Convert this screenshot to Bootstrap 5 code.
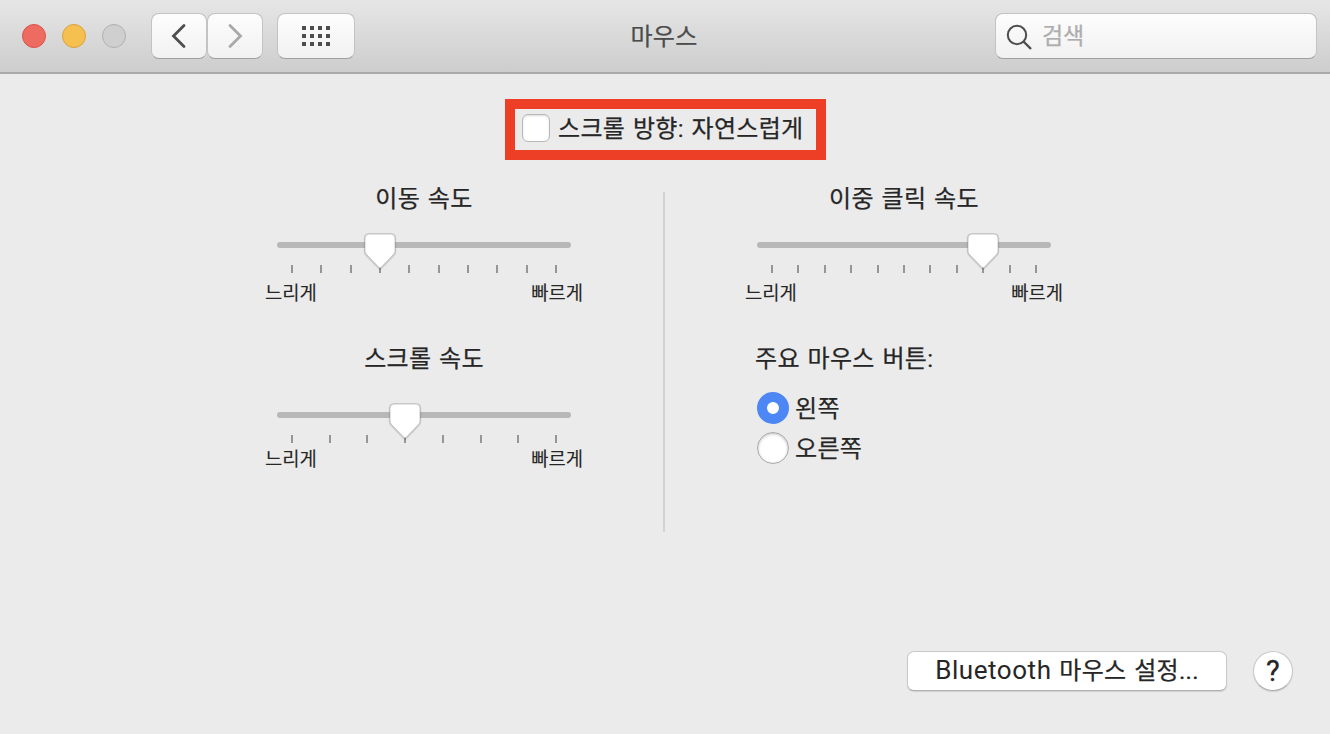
<!DOCTYPE html>
<html lang="ko">
<head>
    <title>마우스</title>
    <meta charset="UTF-8">
    <meta name="viewport" content="width=device-width, initial-scale=1.0">
    <link href="https://cdn.jsdelivr.net/npm/bootstrap@5.3.0/dist/css/bootstrap.min.css" rel="stylesheet">
    <style>
        body {
            font-family: Roboto, "Noto Sans CJK KR", sans-serif;
            font-size: 24px;
            line-height: 32px;
            letter-spacing: .3px;
            color: #262626;
            -webkit-text-stroke: .25px;
            background: #ebebeb;
            overflow: hidden;
        }
        .window { height: 734px; }

        /* Title bar */
        .titlebar {
            display: grid;
            grid-template-columns: 1fr auto 1fr;
            height: 74px;
            padding: 0 2px 1px 0;
            background: linear-gradient(#e6e6e6, #cdcdcd);
            border-bottom: 2px solid #a9a9a9;
        }
        .titlebar-left { padding-left: 22px; }
        .titlebar-right { padding-right: 11px; }
        .titlebar-text { color: #4c4c4c; padding-top: 2px; }
        .light { width: 24px; height: 24px; border-radius: 50%; border: 1px solid; }
        .light-close { background: #ed6b60; border-color: #d9534a; }
        .light-min { background: #f5c04f; border-color: #d9a23c; }
        .light-off { background: #cfcfcf; border-color: #b0b0b0; }
        .tools { margin-left: 25px; }
        .tool {
            height: 46px;
            border: 1px solid #c3c3c3;
            border-bottom-color: #a0a0a0;
            border-radius: 8px;
            background: linear-gradient(#fdfdfd, #f1f1f1);
        }
        .tool-nav { width: 56px; }
        .tool-grid { width: 78px; margin-left: 14px; }
        .tool-search { width: 322px; padding-left: 10px; font-size: 23px; letter-spacing: -.2px; color: #adadad; }

        /* Panes */
        .highlight {
            width: 321px;
            height: 61px;
            margin: 25px 0 0 1px;
            border: 10px solid #ec3f25;
            padding: 0 0 3px 7px;
        }
        .check {
            width: 28px;
            height: 28px;
            border: 1px solid #b8b8b8;
            border-radius: 6px;
            background: #fff;
            box-shadow: inset 0 1px 2px rgba(0, 0, 0, .15);
        }
        .spaced { word-spacing: 1.5px; }
        .lowered { padding-top: 2px; }
        .panes { margin-top: 23px; padding-right: 2px; }
        .pane { width: 320px; }
        .divider { width: 2px; height: 340px; margin: 9px 79px 0; background: #d2d2d2; }
        .slider { display: block; width: 320px; height: 46px; margin-top: 15px; }
        .slider-low { margin-top: 25px; }
        .ends { font-size: 18.8px; line-height: 24px; letter-spacing: 0; margin-top: 6px; padding: 0 1px; -webkit-text-stroke: .12px; }
        .ends-tight { margin-top: 2px; }
        .second { margin-top: 37px; }
        .caption { padding-left: 11px; }
        .choices { margin-top: 13px; padding-left: 13px; }
        .choice { height: 40px; gap: 6px; }
        .dot {
            width: 32px;
            height: 32px;
            border: 1px solid #a8a8a8;
            border-radius: 50%;
            background: #fff;
            box-shadow: inset 0 1px 3px rgba(0, 0, 0, .25);
        }
        .dot-on { border: 10.5px solid #4d87f5; box-shadow: none; }

        .bottom-bar { padding: 0 37px 43px 0; gap: 26px; }
        .push {
            height: 40px;
            width: 320px;
            padding-bottom: 1px;
            border: 1px solid #c9c9c9;
            border-bottom-color: #b0b0b0;
            border-radius: 7px;
            background: #fff;
            box-shadow: 0 1px 1px rgba(0, 0, 0, .12);
        }
        .push-help { width: 40px; border-radius: 50%; font-size: 29px; padding-top: 1px; -webkit-text-stroke: .3px; }
        .latin { font-size: 26px; letter-spacing: .55px; -webkit-text-stroke: 0; }
    </style>
</head>
<body>
    <div class="window d-flex flex-column">
        <header class="titlebar align-items-center">
            <div class="titlebar-left d-flex align-items-center">
                <div class="d-flex gap-3">
                    <span class="light light-close"></span>
                    <span class="light light-min"></span>
                    <span class="light light-off"></span>
                </div>
                <div class="tools d-flex">
                    <div class="tool tool-nav d-flex align-items-center justify-content-center">
                        <svg width="16" height="26" fill="none" stroke="#4d4d4d" stroke-width="2.8" stroke-linecap="round"><path d="M13 2.500 2.500 13 13 23.500"/></svg>
                    </div>
                    <div class="tool tool-nav d-flex align-items-center justify-content-center">
                        <svg width="16" height="26" fill="none" stroke="#a9a9a9" stroke-width="2.8" stroke-linecap="round"><path d="M3 2.500 13.500 13 3 23.500"/></svg>
                    </div>
                    <div class="tool tool-grid d-flex align-items-center justify-content-center">
                        <svg width="28" height="20" stroke="#4d4d4d" stroke-width="4" stroke-dasharray="4 4"><path d="M0 2h28M0 10h28M0 18h28"/></svg>
                    </div>
                </div>
            </div>
            <div class="titlebar-text">마우스</div>
            <div class="titlebar-right d-flex justify-content-end">
                <div class="tool tool-search d-flex align-items-center">
                    <svg width="28" height="28" fill="none" stroke="#4d4d4d" stroke-width="2"><circle cx="11" cy="13" r="9.200"/><path d="m17.500 19.500 7.500 7.500" stroke-width="2.400"/></svg>
                    <span class="ms-2 lowered">검색</span>
                </div>
            </div>
        </header>

        <main class="d-flex flex-column align-items-center">
            <div class="highlight d-flex align-items-center">
                <span class="check me-2"></span>
                <span class="spaced lowered text-nowrap">스크롤 방향: 자연스럽게</span>
            </div>

            <div class="panes d-flex justify-content-center">
                <section class="pane">
                    <div class="spaced text-center">이동 속도</div>
                    <svg class="slider" data-ticks="10" data-value="3"></svg>
                    <div class="ends d-flex justify-content-between"><span>느리게</span><span>빠르게</span></div>

                    <div class="spaced second text-center">스크롤 속도</div>
                    <svg class="slider slider-low" data-ticks="8" data-value="3"></svg>
                    <div class="ends ends-tight d-flex justify-content-between"><span>느리게</span><span>빠르게</span></div>
                </section>

                <div class="divider"></div>

                <section class="pane">
                    <div class="spaced text-center">이중 클릭 속도</div>
                    <svg class="slider" data-ticks="11" data-value="8"></svg>
                    <div class="ends d-flex justify-content-between"><span>느리게</span><span>빠르게</span></div>

                    <div class="spaced second caption">주요 마우스 버튼:</div>
                    <div class="choices">
                        <div class="choice d-flex align-items-center"><span class="dot dot-on"></span><span class="lowered">왼쪽</span></div>
                        <div class="choice d-flex align-items-center"><span class="dot"></span><span class="lowered">오른쪽</span></div>
                    </div>
                </section>
            </div>
        </main>

        <footer class="bottom-bar d-flex justify-content-end mt-auto">
            <div class="push spaced d-flex align-items-center justify-content-center">
                <div><span class="latin">Bluetooth</span> 마우스 설정...</div>
            </div>
            <div class="push push-help d-flex align-items-center justify-content-center">?</div>
        </footer>
    </div>

    <script src="https://cdn.jsdelivr.net/npm/bootstrap@5.3.0/dist/js/bootstrap.bundle.min.js"></script>
    <script>
        // Draw the track, tick marks and thumb of each slider
        document.querySelectorAll('.slider').forEach(function(slider) {
            const ticks = Number(slider.dataset.ticks);
            const at = i => Math.round(28 + i * 264 / (ticks - 1));
            let parts = '<rect x="13" y="12" width="294" height="6" rx="3" fill="#b8b8b8"/>';
            for (let i = 0; i < ticks; i++) {
                parts += `<rect x="${at(i) - 1}" y="35" width="2" height="8" fill="#969696"/>`;
            }
            const x = at(Number(slider.dataset.value));
            const thumb = 'M-15 8q0-4 4-4h22q4 0 4 4v13q0 2-1.500 3.500L1.200 37.300q-1.200 1.200-2.400 0L-13.500 24.500q-1.500-1.500-1.500-3.500z';
            parts += `<g transform="translate(${x})"><path d="${thumb}" fill="none" stroke="#000" stroke-opacity=".12" stroke-width="2.500" transform="translate(0 .6)"/>`;
            parts += `<path d="${thumb}" fill="#fff" stroke="#aaa" stroke-width=".6"/></g>`;
            slider.innerHTML = parts;
        });
    </script>
</body>
</html>
